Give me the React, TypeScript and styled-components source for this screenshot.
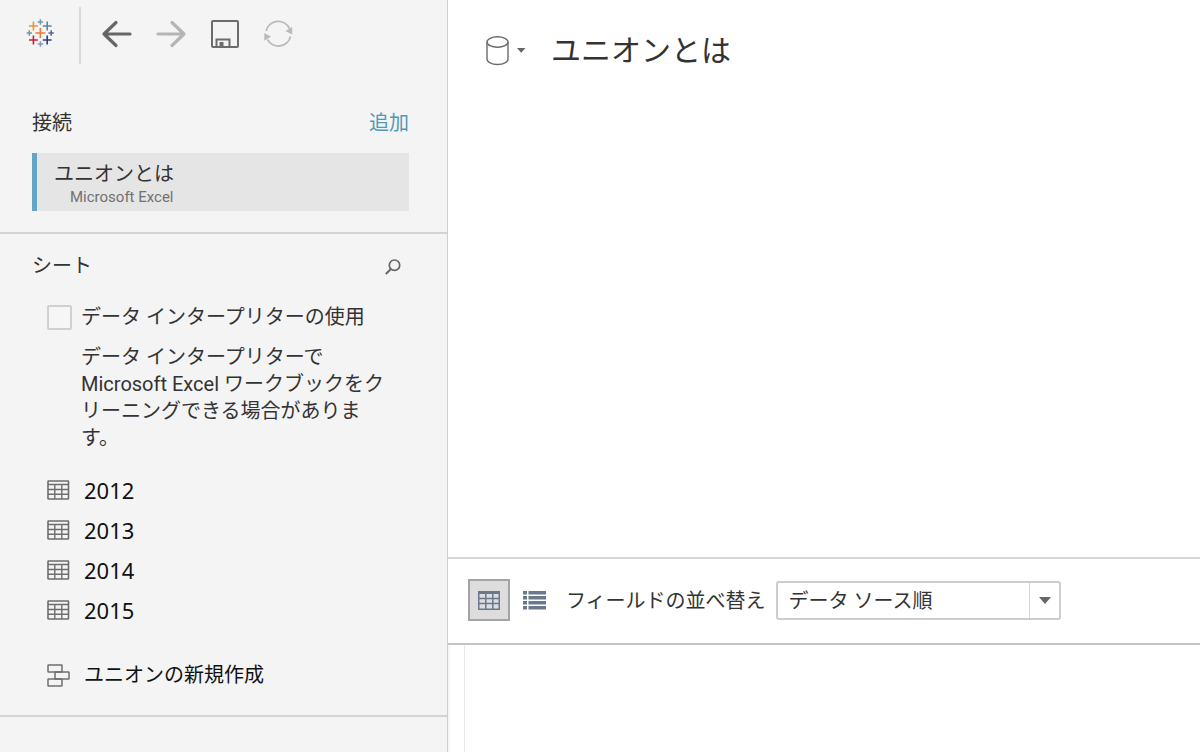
import React from "react";
import styled, { createGlobalStyle } from "styled-components";

const GlobalStyle = createGlobalStyle`
  *, *::before, *::after { box-sizing: border-box; }
  body {
    margin: 0;
    background: #ffffff;
    color: #333333;
    font-family: Roboto, "Noto Sans CJK JP", sans-serif;
    font-size: 20px;
    line-height: 27px;
  }
  button, select, input { font: inherit; color: inherit; margin: 0; }
  h1, h2, p, ul { margin: 0; padding: 0; font-weight: 400; }
`;

const Page = styled.div`
  display: flex;
  min-height: 100vh;
`;

const Sidebar = styled.aside`
  flex: 0 0 448px;
  background: #f4f4f4;
  border-right: 1px solid #cfcfcf;
`;

const Toolbar = styled.div`
  display: flex;
  align-items: center;
  height: 70px;
  padding: 0 26px;
`;

const IconButton = styled.button`
  display: flex;
  padding: 0;
  border: 0;
  background: none;
  cursor: pointer;
  &:disabled { cursor: default; }
`;

const ToolGroup = styled.div`
  display: flex;
  align-items: center;
  gap: 22px;
  height: 57px;
  margin-left: 25px;
  padding-left: 20px;
  padding-bottom: 3px;
  border-left: 2px solid #d9d9d9;
`;

const LogoButton = styled(IconButton)`
  padding-bottom: 4px;
`;

const Connections = styled.section`
  padding: 40px 38px 21px 32px;
  border-bottom: 2px solid #d3d3d3;
`;

const SectionHeader = styled.div`
  display: flex;
  align-items: center;
  justify-content: space-between;
`;

const SectionTitle = styled.h2`
  font-size: 20px;
`;

const AddLink = styled.a`
  color: #4f9ab9;
  text-decoration: none;
`;

const Connection = styled.button`
  display: block;
  width: 100%;
  height: 58px;
  margin-top: 16px;
  padding: 2px 17px;
  border: 0;
  border-left: 5px solid #63a5c6;
  background: #e5e5e5;
  text-align: left;
`;

const ConnectionName = styled.span`
  display: block;
  line-height: 30px;
`;

const ConnectionType = styled.span`
  display: block;
  padding-left: 16px;
  font-size: 15px;
  line-height: 17px;
  color: #717171;
`;

const Sheets = styled.section`
  padding: 19px 46px 20px 32px;
  border-bottom: 2px solid #d3d3d3;
`;

const SheetsBody = styled.div`
  padding-left: 15px;
`;

const CheckRow = styled.label`
  display: flex;
  align-items: center;
  gap: 9px;
  margin-top: 24px;
`;

const Checkbox = styled.input`
  appearance: none;
  width: 25px;
  height: 25px;
  border: 2px solid #d0d0d0;
  border-radius: 2px;
  background: #f6f6f6;
  &:checked { background: #63a5c6; }
`;

const Hint = styled.p`
  padding: 13px 14px 0 34px;
`;

const SheetList = styled.ul`
  margin-top: 18px;
  list-style: none;
`;

const ItemButton = styled.button`
  display: flex;
  align-items: center;
  gap: 14px;
  width: 100%;
  height: 40px;
  padding: 0;
  border: 0;
  background: none;
  color: #111111;
  text-align: left;
`;

const SheetName = styled.span`
  font-family: "Noto Sans", sans-serif;
  font-size: 22px;
`;

const UnionRow = styled.div`
  margin-top: 25px;
`;

const Main = styled.main`
  display: flex;
  flex: 1;
  flex-direction: column;
  min-width: 0;
`;

const Canvas = styled.section`
  flex: 1;
  min-height: 300px;
  padding: 31px 38px;
`;

const SourceHeader = styled.header`
  display: flex;
  align-items: center;
`;

const SourceTitle = styled.h1`
  margin-left: 25px;
  font-size: 30px;
  line-height: 40px;
`;

const GridBar = styled.div`
  display: flex;
  align-items: center;
  height: 88px;
  padding: 0 20px 2px;
  border-top: 2px solid #d6d6d6;
  border-bottom: 2px solid #c4c6c6;
`;

const ViewButton = styled.button<{ $active?: boolean }>`
  display: flex;
  align-items: center;
  justify-content: center;
  width: ${(p) => (p.$active ? 42 : 48)}px;
  height: 42px;
  padding: 0;
  border: ${(p) => (p.$active ? "2px solid #a3a5a4" : "0")};
  background: ${(p) => (p.$active ? "#dcdddc" : "none")};
`;

const SortLabel = styled.label`
  margin: 0 10px 0 8px;
  padding-top: 2px;
  white-space: nowrap;
`;

const SelectBox = styled.div`
  display: grid;
  width: 285px;
  height: 39px;
  & > * { grid-area: 1 / 1; }
`;

const Select = styled.select`
  appearance: none;
  width: 100%;
  padding: 2px 40px 0 11px;
  border: 2px solid #cdcdcd;
  border-radius: 3px;
  background: #ffffff;
`;

const SelectArrow = styled.span`
  display: flex;
  align-items: center;
  justify-content: center;
  justify-self: end;
  width: 32px;
  margin: 2px 0;
  border-left: 1px solid #d8d8d8;
  pointer-events: none;
`;

const GridArea = styled.section`
  display: flex;
  height: 107px;
`;

const Gutter = styled.div`
  width: 17px;
  border-left: 2px solid #f6f6f6;
  border-right: 1px solid #e9e9e9;
`;

const crosses: [number, number, number, number, string][] = [
  [14.4, 14, 5, 1.6, "#eb7a33"],
  [7.4, 7, 4.4, 1.6, "#ec9430"],
  [21.2, 7, 4.4, 1.6, "#5b879b"],
  [7.4, 21, 4.4, 1.6, "#c8203d"],
  [21.2, 21, 4.4, 1.6, "#1f457e"],
  [14.4, 3, 2.7, 1.5, "#6f98a8"],
  [3.3, 14, 2.7, 1.5, "#6f98a8"],
  [25.2, 14, 2.7, 1.5, "#5b6591"],
  [14.4, 25, 2.7, 1.5, "#8a96b8"],
];

const Logo = () => (
  <svg width="28" height="28" viewBox="0 0 28 28" aria-hidden="true">
    {crosses.map(([x, y, r, w, c]) => (
      <path key={`${x}-${y}`} d={`M${x - r} ${y}H${x + r}M${x} ${y - r}V${y + r}`} stroke={c} strokeWidth={w} />
    ))}
  </svg>
);

const Arrow = ({ right }: { right?: boolean }) => (
  <svg width="32" height="32" viewBox="0 0 32 32" fill="none" aria-hidden="true"
    stroke={right ? "#b5b5b5" : "#666666"} strokeWidth="3.2" strokeLinecap="round" strokeLinejoin="round">
    {right ? <path d="M3 16H29M17 4.5L29 16L17 27.5" /> : <path d="M29 16H3M15 4.5L3 16L15 27.5" />}
  </svg>
);

const SaveIcon = () => (
  <svg width="32" height="32" viewBox="0 0 32 32" fill="none" stroke="#6c6c6c" strokeWidth="2" aria-hidden="true">
    <rect x="3" y="3" width="26" height="26" rx="1" />
    <path d="M7.5 29V21.5H20.5V29" />
    <rect x="10.500" y="24" width="4" height="4" fill="#6c6c6c" stroke="none" />
  </svg>
);

const RefreshIcon = () => (
  <svg width="32" height="32" viewBox="0 0 32 32" fill="none" stroke="#b9b9b9" strokeWidth="1.800" aria-hidden="true">
    <path d="M3.200 13A12.400 12.400 0 0 1 26.500 10.500" />
    <path d="M27.500 18.500A12.400 12.400 0 0 1 4.500 21.500" />
    <path d="M29.200 9V16.500L22.500 13Z" fill="#b9b9b9" stroke="none" />
    <path d="M1.300 15V22.500L8 18.800Z" fill="#b9b9b9" stroke="none" />
  </svg>
);

const SearchIcon = () => (
  <svg width="16" height="16" viewBox="0 0 16 16" fill="none" stroke="#666666" strokeWidth="1.700" aria-hidden="true">
    <circle cx="9.500" cy="6.200" r="5.200" />
    <path d="M6 10L0.800 15" strokeWidth="2" />
  </svg>
);

const TableIcon = () => (
  <svg width="23" height="20" viewBox="0 0 23 20" fill="none" stroke="#6e6e6e" aria-hidden="true">
    <rect x="1" y="1" width="20.500" height="18" rx="0.500" strokeWidth="1.600" />
    <path d="M1 4.500H22M1 9.500H22M1 14.200H22M7.800 4.500V19M14.800 4.500V19" strokeWidth="1.400" />
  </svg>
);

const GridIcon = () => (
  <svg width="22" height="19" viewBox="0 0 22 19" fill="none" stroke="#6b778d" aria-hidden="true">
    <rect x="0.750" y="0.750" width="20.500" height="17.500" strokeWidth="1.500" />
    <path d="M0 1.500H22" strokeWidth="3" />
    <path d="M0 7.500H22M0 12.500H22M7.800 2V18M14.800 2V18" strokeWidth="1.500" />
  </svg>
);

const ListIcon = () => (
  <svg width="23" height="19" viewBox="0 0 23 19" fill="#6b778d" aria-hidden="true">
    {[0, 5, 10, 15].map((y) => (
      <path key={y} d={`M0 ${y}H4V${y + 3.500}H0ZM5.500 ${y}H23V${y + 3.500}H5.500Z`} />
    ))}
  </svg>
);

const UnionIcon = () => (
  <svg width="23" height="23" viewBox="0 0 23 23" fill="none" stroke="#6e6e6e" strokeWidth="1.500" aria-hidden="true">
    <rect x="1" y="1" width="14" height="7" rx="0.500" />
    <rect x="8" y="8" width="14" height="7" rx="0.500" />
    <rect x="1" y="15" width="14" height="7" rx="0.500" />
  </svg>
);

const DatabaseIcon = () => (
  <svg width="40" height="30" viewBox="0 0 40 30" fill="none" stroke="#6b6b6b" strokeWidth="1.400" aria-hidden="true">
    <ellipse cx="11.500" cy="6" rx="10.500" ry="5.200" />
    <path d="M1 6V23C1 26 5.500 28.500 11.500 28.500S22 26 22 23V6" />
    <path d="M31 12H39.500L35.200 16.700Z" fill="#666666" stroke="none" />
  </svg>
);

const sheets = ["2012", "2013", "2014", "2015"];

export default function App() {
  return (
    <Page>
      <GlobalStyle />
      <Sidebar>
        <Toolbar>
          <LogoButton aria-label="スタート"><Logo /></LogoButton>
          <ToolGroup>
            <IconButton aria-label="戻る"><Arrow /></IconButton>
            <IconButton aria-label="進む" disabled><Arrow right /></IconButton>
            <IconButton aria-label="保存"><SaveIcon /></IconButton>
            <IconButton aria-label="更新" disabled><RefreshIcon /></IconButton>
          </ToolGroup>
        </Toolbar>
        <Connections>
          <SectionHeader>
            <SectionTitle>接続</SectionTitle>
            <AddLink href="#">追加</AddLink>
          </SectionHeader>
          <Connection>
            <ConnectionName>ユニオンとは</ConnectionName>
            <ConnectionType>Microsoft Excel</ConnectionType>
          </Connection>
        </Connections>
        <Sheets>
          <SectionHeader>
            <SectionTitle>シート</SectionTitle>
            <IconButton aria-label="検索"><SearchIcon /></IconButton>
          </SectionHeader>
          <SheetsBody>
            <CheckRow>
              <Checkbox type="checkbox" />
              データ インタープリターの使用
            </CheckRow>
            <Hint>データ インタープリターで Microsoft Excel ワークブックをクリーニングできる場合があります。</Hint>
            <SheetList>
              {sheets.map((name) => (
                <li key={name}>
                  <ItemButton>
                    <TableIcon />
                    <SheetName>{name}</SheetName>
                  </ItemButton>
                </li>
              ))}
            </SheetList>
            <UnionRow>
              <ItemButton>
                <UnionIcon />
                ユニオンの新規作成
              </ItemButton>
            </UnionRow>
          </SheetsBody>
        </Sheets>
      </Sidebar>
      <Main>
        <Canvas>
          <SourceHeader>
            <IconButton aria-label="データ ソース"><DatabaseIcon /></IconButton>
            <SourceTitle>ユニオンとは</SourceTitle>
          </SourceHeader>
        </Canvas>
        <GridBar>
          <ViewButton $active aria-label="グリッド表示"><GridIcon /></ViewButton>
          <ViewButton aria-label="リスト表示"><ListIcon /></ViewButton>
          <SortLabel htmlFor="sort">フィールドの並べ替え</SortLabel>
          <SelectBox>
            <Select id="sort">
              <option>データ ソース順</option>
            </Select>
            <SelectArrow>
              <svg width="12" height="7" viewBox="0 0 12 7" aria-hidden="true">
                <path d="M0 0H12L6 7Z" fill="#666666" />
              </svg>
            </SelectArrow>
          </SelectBox>
        </GridBar>
        <GridArea>
          <Gutter />
        </GridArea>
      </Main>
    </Page>
  );
}
